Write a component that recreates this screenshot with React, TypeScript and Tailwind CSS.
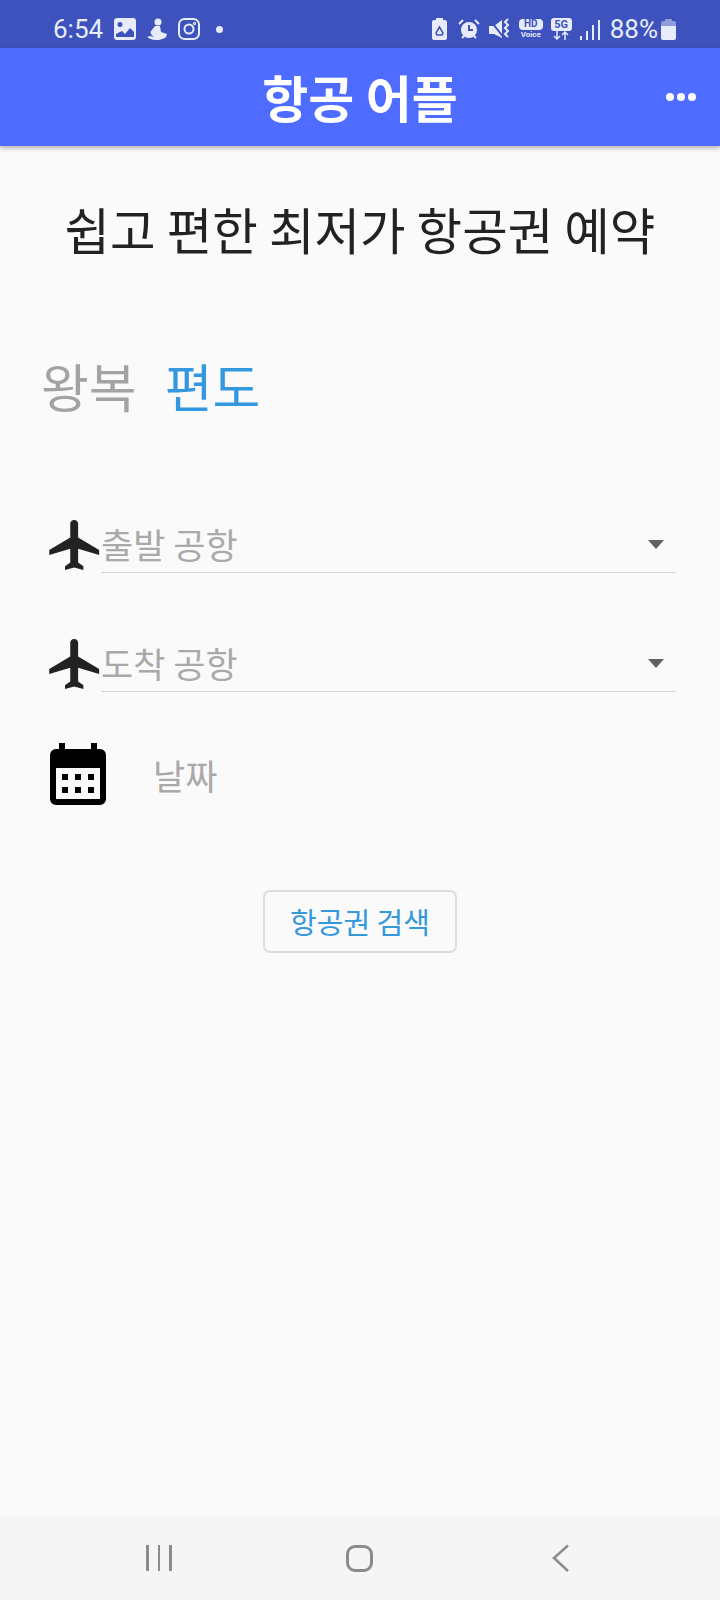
import React from "react";

const cjk = "font-['Noto_Sans_CJK_KR','Noto_Sans_CJK_SC',sans-serif]";

const Plane = () => (
  <svg viewBox="0 0 24 24" preserveAspectRatio="none" className="w-[63px] h-[60px] shrink-0 -mr-[6px] -mb-[2px] fill-[#222222]">
    <path d="M21 16v-2l-8-5V3.5c0-.83-.67-1.5-1.5-1.5S10 2.67 10 3.5V9l-8 5v2l8-2.5V19l-2 1.5V22l3.5-1 3.5 1v-1.5L13 19v-5.5l8 2.5z" />
  </svg>
);

const Calendar = () => (
  <svg viewBox="0 0 56 62" className="w-[56px] h-[62px] shrink-0">
    <path
      fillRule="evenodd"
      d="M9 0h6v6h26V0h6v6h3a6 6 0 0 1 6 6v44a6 6 0 0 1-6 6H6a6 6 0 0 1-6-6V12a6 6 0 0 1 6-6h3zM6 25v31h44V25z"
    />
    <path d="M12 31h6v6h-6zM25 31h6v6h-6zM38 31h6v6h-6zM12 44h6v6h-6zM25 44h6v6h-6zM38 44h6v6h-6z" />
  </svg>
);

const Select = ({ label }: { label: string }) => (
  <div className="flex items-end pl-[44px] pr-[44px] h-[67px]">
    <Plane />
    <div className="flex-1 h-[63px] flex items-center justify-between border-b border-[#d6d6d6]">
      <span className="text-[35px] leading-none text-[#a9a9a9] pt-[4px]">{label}</span>
      <span className="w-0 h-0 mr-[12px] mt-[6px] border-x-[8px] border-x-transparent border-t-[9px] border-t-[#616161]" />
    </div>
  </div>
);

const StatusBar = () => (
  <div className="h-[48px] pt-[10px] bg-[#3d52bc] flex items-center justify-between pl-[53px] pr-[44px] text-[#e8ecfa] font-['Roboto',sans-serif]">
    <div className="flex items-center">
      <span className="text-[26px] leading-none">6:54</span>
      {/* gallery */}
      <svg viewBox="0 0 22 22" className="w-[22px] h-[22px] ml-[11px] fill-current">
        <path
          fillRule="evenodd"
          d="M3 0h16a3 3 0 0 1 3 3v16a3 3 0 0 1-3 3H3a3 3 0 0 1-3-3V3a3 3 0 0 1 3-3zM6 4a2.5 2.5 0 1 0 0 5 2.5 2.5 0 0 0 0-5zM2 16v3h18v-5l-4-4-5 6-3-3z"
        />
      </svg>
      {/* rider */}
      <svg viewBox="0 0 20 22" className="w-[20px] h-[22px] ml-[11px] fill-current">
        <circle cx="11" cy="4" r="3.500" />
        <path d="M8 8h5l1 6 6 2-1 3c-2 2-5 2-7 3-4 0-8 0-12-3l3-1 4 1c-3-2-4-4-3-6z" />
      </svg>
      {/* instagram */}
      <svg viewBox="0 0 22 22" className="w-[22px] h-[22px] ml-[11px] fill-none stroke-current" strokeWidth="2">
        <rect x="1" y="1" width="20" height="20" rx="5.5" />
        <circle cx="11" cy="11" r="4.5" />
        <circle cx="16.5" cy="5.5" r="0.6" />
      </svg>
      <span className="w-[7px] h-[7px] rounded-full bg-current ml-[16px]" />
    </div>
    <div className="flex items-center">
      {/* battery saver */}
      <svg viewBox="0 0 15 22" className="w-[15px] h-[22px]">
        <path d="M4 0h7v2h2a2 2 0 0 1 2 2v16a2 2 0 0 1-2 2H2a2 2 0 0 1-2-2V4a2 2 0 0 1 2-2h2z" className="fill-current" />
        <path d="M7.500 9l-3.500 6 1 2h5l1-2z" className="fill-none stroke-[#3d52bc]" strokeWidth="1.500" />
      </svg>
      {/* alarm */}
      <svg viewBox="0 0 22 22" className="w-[22px] h-[22px] ml-[11px]">
        <circle cx="11" cy="12" r="8" className="fill-current" />
        <path d="M11 7v5h4" className="fill-none stroke-[#3d52bc]" strokeWidth="2" />
        <path d="M1 6l4-4M21 6l-4-4M4 20l2-2M18 20l-2-2" className="fill-none stroke-current" strokeWidth="2" />
      </svg>
      {/* mute */}
      <svg viewBox="0 0 22 22" className="w-[22px] h-[22px] ml-[9px]">
        <path d="M0 8h5l8-6v18l-8-4H0z" className="fill-current" />
        <path d="M1 2l14 18" className="stroke-[#3d52bc]" strokeWidth="2" />
        <path d="M19 1l-3 3 3 3-3 3 3 3-3 3 3 3" className="fill-none stroke-current" strokeWidth="2" />
      </svg>
      {/* hd voice */}
      <div className="flex flex-col items-center ml-[8px] w-[24px]">
        <span className="w-[24px] h-[11px] rounded-[4px] bg-current flex items-center justify-center">
          <span className="text-[10px] leading-none font-bold text-[#3d52bc]">HD</span>
        </span>
        <span className="text-[8px] leading-[10px] font-bold">Voice</span>
      </div>
      {/* 5g */}
      <div className="flex flex-col items-center ml-[8px] w-[21px]">
        <span className="w-[21px] h-[13px] rounded-[3px] bg-current flex items-center justify-center">
          <span className="text-[11px] leading-none font-bold text-[#3d52bc]">5G</span>
        </span>
        <svg viewBox="0 0 16 9" className="w-[16px] h-[9px] fill-none stroke-current" strokeWidth="1.500">
          <path d="M4 0v8M1 5l3 3 3-3M12 9V1M9 4l3-3 3 3" />
        </svg>
      </div>
      {/* signal */}
      <div className="flex items-end gap-[4px] h-[21px] ml-[8px]">
        <span className="w-[2px] h-[4px] bg-current" />
        <span className="w-[2px] h-[9px] bg-current" />
        <span className="w-[2px] h-[15px] bg-current" />
        <span className="w-[2px] h-[20px] bg-current" />
      </div>
      <span className="text-[26px] leading-none ml-[10px]">88%</span>
      <svg viewBox="0 0 15 21" className="w-[15px] h-[21px] ml-[3px]">
        <path d="M4 0h7v2h2a2 2 0 0 1 2 2v3H0V4a2 2 0 0 1 2-2h2z" className="fill-[#8f9cdc]" />
        <path d="M0 7h15v12a2 2 0 0 1-2 2H2a2 2 0 0 1-2-2z" className="fill-current" />
      </svg>
    </div>
  </div>
);

const App = () => {
  return (
    <div className={`w-[720px] h-[1600px] flex flex-col bg-[#fafafa] overflow-hidden ${cjk}`}>
      <StatusBar />
      {/* app bar */}
      <div className="h-[98px] bg-[#4e6cff] flex items-center justify-between pl-[24px] pr-[24px] shadow-[0_2px_5px_rgba(0,0,0,0.3)] z-10">
        <span className="w-[30px]" />
        <span className="text-[50px] leading-none font-bold text-white pb-[2px]">항공 어플</span>
        <div className="flex gap-[3px]">
          <span className="w-[8px] h-[8px] rounded-full bg-white" />
          <span className="w-[8px] h-[8px] rounded-full bg-white" />
          <span className="w-[8px] h-[8px] rounded-full bg-white" />
        </div>
      </div>

      <div className="flex-1 flex flex-col">
        <h1 className="mt-[53px] h-[60px] text-center text-[49.500px] leading-[60px] text-[#222222]">
          쉽고 편한 최저가 항공권 예약
        </h1>

        <div className="mt-[92px] h-[70px] flex items-center pl-[41px] gap-[28px] text-[52px] leading-none">
          <span className="text-[#a3a3a3]">왕복</span>
          <span className="text-[#3498e0]">편도</span>
        </div>

        <div className="mt-[85px]">
          <Select label="출발 공항" />
        </div>
        <div className="mt-[52px]">
          <Select label="도착 공항" />
        </div>

        <div className="mt-[51px] flex items-center pl-[50px]">
          <Calendar />
          <span className="ml-[47px] text-[35px] leading-none text-[#a9a9a9]">날짜</span>
        </div>

        <button className="mt-[85px] self-center w-[194px] h-[63px] border-2 border-[#dddddd] rounded-[7px] text-[29px] leading-none text-[#3498db]">
          항공권 검색
        </button>
      </div>

      {/* nav bar */}
      <div className="h-[84px] bg-[#f5f5f5] flex items-center justify-between pl-[146px] pr-[150px]">
        <div className="flex gap-[9px]">
          <span className="w-[2.500px] h-[26px] bg-[#8c8c8c]" />
          <span className="w-[2.500px] h-[26px] bg-[#8c8c8c]" />
          <span className="w-[2.500px] h-[26px] bg-[#8c8c8c]" />
        </div>
        <span className="w-[27px] h-[27px] mr-[4px] border-[3px] border-[#8c8c8c] rounded-[9px]" />
        <svg viewBox="0 0 18 28" className="w-[18px] h-[28px] fill-none stroke-[#8c8c8c]" strokeWidth="2.500">
          <path d="M16 1.500L2 14l14 13" />
        </svg>
      </div>
    </div>
  );
};

export default App;
